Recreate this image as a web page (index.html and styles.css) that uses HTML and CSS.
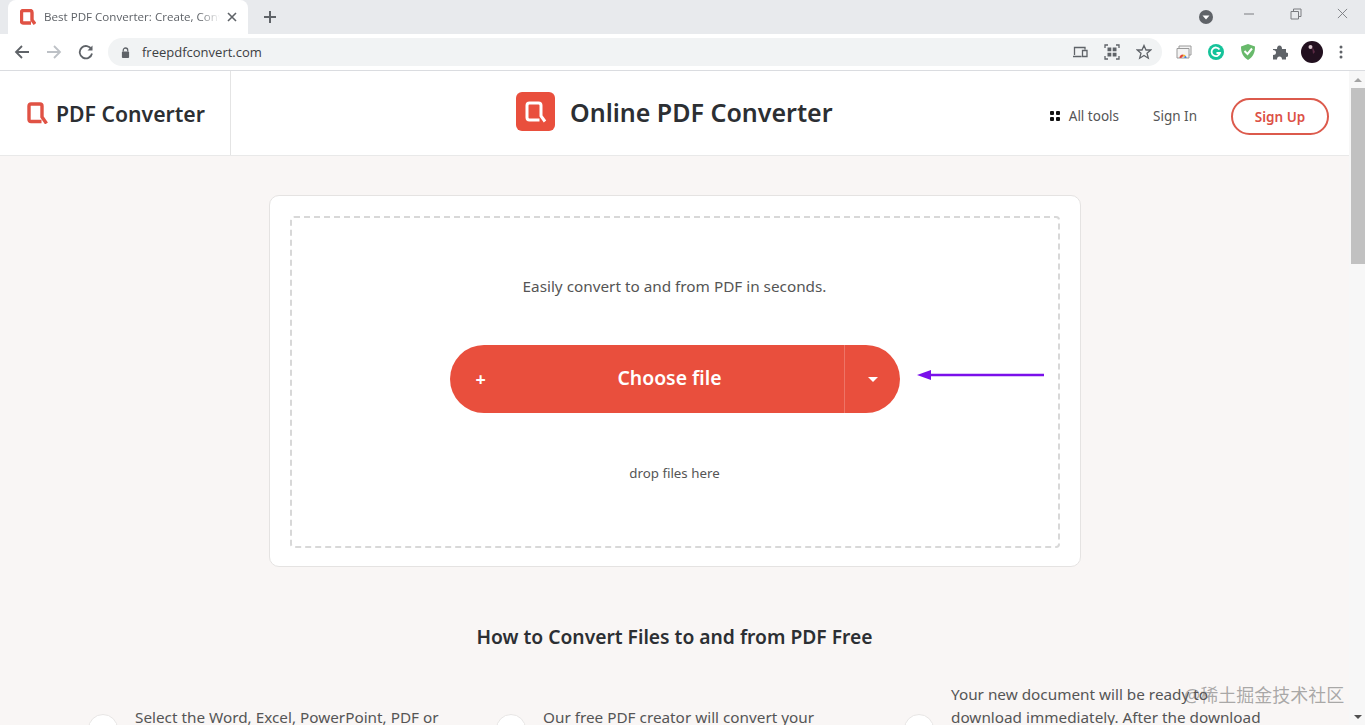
FILE: index.html
```html
<!DOCTYPE html>
<html lang="en">
<head>
<meta charset="utf-8">
<title>Best PDF Converter</title>
<link rel="stylesheet" href="styles.css">
</head>
<body>
<div class="app">
  <div class="tabstrip">
    <div class="tab">
      <svg class="tab-logo" viewBox="0 0 16 16"><path class="logo-stroke" d="M11 14H3.500Q1.500 14 1.500 12V3.500Q1.500 1.500 3.500 1.500H10Q12 1.500 12 3.500V11L15 15"/></svg>
      <span class="tab-title">Best PDF Converter: Create, Convert</span>
      <svg class="tab-close" viewBox="0 0 10 10"><path d="M1 1L9 9M9 1L1 9"/></svg>
    </div>
    <svg class="new-tab" viewBox="0 0 12 12"><path d="M6 0V12M0 6H12"/></svg>
    <div class="strip-right">
      <svg class="media" viewBox="0 0 14 14"><circle cx="7" cy="7" r="7"/><path d="M3.500 5.500H10.500L7 9.500Z"/></svg>
      <div class="winctl">
        <svg viewBox="0 0 12 12"><path d="M1 6H11"/></svg>
        <svg viewBox="0 0 12 12"><path d="M1 3.500H8.500V11H1ZM3.500 3.500V1H11V8.500H8.500"/></svg>
        <svg viewBox="0 0 12 12"><path d="M1 1L11 11M11 1L1 11"/></svg>
      </div>
    </div>
  </div>
  <div class="toolbar">
    <svg class="nav" viewBox="0 0 16 16"><path d="M15 8H2M8 2L2 8L8 14"/></svg>
    <svg class="nav nav-off" viewBox="0 0 16 16"><path d="M1 8H14M8 2L14 8L8 14"/></svg>
    <svg class="nav" viewBox="0 0 16 16"><path d="M13.500 5.500A6.200 6.200 0 1 0 14 9.500"/><path class="fill-icon" d="M14.500 1.500V6.500H9.500Z"/></svg>
    <div class="omnibox">
      <svg class="lock" viewBox="0 0 10 12"><path d="M2.500 5V3.500A2.500 2.500 0 0 1 7.500 3.500V5" class="lock-ring"/><rect x="1" y="5" width="8" height="7" rx="1"/></svg>
      <span class="url">freepdfconvert.com</span>
      <div class="omni-icons">
        <svg viewBox="0 0 16 16"><path d="M2.500 11V3.500H13V5.500M1 12.500H9.500M10.500 6.500H15V12.500H10.500Z"/></svg>
        <svg viewBox="0 0 16 16"><path d="M1 4V1H4M12 1H15V4M15 12V15H12M4 15H1V12"/><path class="fill-icon" d="M3.500 3.500H7.300V7.300H3.500ZM8.700 3.500H12.500V7.300H8.700ZM3.500 8.700H7.300V12.500H3.500ZM8.700 8.700H12.500V12.500H8.700Z"/></svg>
        <svg viewBox="0 0 16 16"><path d="M8 1.500L10 6H14.800L11 9.200L12.300 14.200L8 11.500L3.700 14.200L5 9.200L1.200 6H6Z"/></svg>
      </div>
    </div>
    <div class="ext-icons">
      <svg viewBox="0 0 16 16"><path class="ext-frame" d="M3 4V2H15V11H13M1 4.500H13V14H1Z"/><path class="ext-r" d="M3.500 14A3.500 3.500 0 0 1 7 10.500V12.500A1.500 1.500 0 0 0 5.500 14Z"/><path class="ext-y" d="M7 10.500A3.500 3.500 0 0 1 9.700 11.800L8.200 13A1.500 1.500 0 0 0 7 12.500Z"/><path class="ext-b" d="M9.700 11.800A3.500 3.500 0 0 1 10.500 14H8.500A1.500 1.500 0 0 0 8.200 13Z"/></svg>
      <svg viewBox="0 0 16 16"><circle class="ext-g" cx="8" cy="8" r="8"/><path class="ext-gl" d="M11.500 5.500A4.300 4.300 0 1 0 12 9H8.500"/></svg>
      <svg viewBox="0 0 16 16"><path class="ext-s" d="M8 0L15 2.500C15 9 13 13 8 16C3 13 1 9 1 2.500Z"/><path class="ext-c" d="M4.500 7L7.500 10L12 4.500"/></svg>
      <svg viewBox="0 0 16 16"><path class="fill-icon" d="M1 5H5Q5 1.500 7.500 1.500T10 5H14V8.500Q16.500 8.500 16.500 10.700T14 13V15.500H10Q10 12.500 7.500 12.500T5 15.500H1V11Q4 11 4 8.500T1 6Z"/></svg>
      <svg class="avatar" viewBox="0 0 22 22"><circle class="av-bg" cx="11" cy="11" r="11"/><circle class="av-dot" cx="9.500" cy="6" r="2"/><path class="av-m" d="M11 5L14 11L12 13Z"/></svg>
      <svg class="menu" viewBox="0 0 4 14"><circle cx="2" cy="2" r="1.500"/><circle cx="2" cy="7" r="1.500"/><circle cx="2" cy="12" r="1.500"/></svg>
    </div>
  </div>
  <div class="viewport">
    <div class="page">
      <header class="site-header">
        <div class="brand">
          <svg class="brand-logo" viewBox="0 0 21 22"><path class="logo-stroke" d="M14.500 19.500H4Q2 19.500 2 17.500V4Q2 2 4 2H13Q15 2 15 4V15L19.500 21.500"/></svg>
          <span class="brand-name">PDF Converter</span>
        </div>
        <div class="headline">
          <span class="headline-badge"><svg viewBox="0 0 26 26"><path class="badge-stroke" d="M16.500 21H6.500Q4 21 4 18.500V6.500Q4 4 6.500 4H15.500Q18 4 18 6.500V17L22 22.500"/></svg></span>
          <h1 class="headline-text">Online PDF Converter</h1>
        </div>
        <nav class="site-nav">
          <a class="nav-tools"><svg viewBox="0 0 10 10"><rect width="4" height="4" rx="1"/><rect x="6" width="4" height="4" rx="1"/><rect y="6" width="4" height="4" rx="1"/><rect x="6" y="6" width="4" height="4" rx="1"/></svg>All tools</a>
          <a class="nav-signin">Sign In</a>
          <a class="nav-signup">Sign Up</a>
        </nav>
      </header>
      <main class="content">
        <section class="card">
          <div class="dropzone">
            <p class="lead">Easily convert to and from PDF in seconds.</p>
            <div class="choose">
              <div class="choose-main">
                <span class="choose-plus">+</span>
                <span class="choose-label">Choose file</span>
              </div>
              <div class="choose-more"><span class="caret"></span></div>
              <svg class="arrow" viewBox="0 0 128 12"><path class="arrow-line" d="M12 6H127"/><path class="arrow-head" d="M0 6L14 1V11Z"/></svg>
            </div>
            <p class="drop">drop files here</p>
          </div>
        </section>
        <h2 class="howto">How to Convert Files to and from PDF Free</h2>
        <div class="steps">
          <div class="step"><span class="num">1</span><p>Select the Word, Excel, PowerPoint, PDF or other file you wish to convert.</p></div>
          <div class="step"><span class="num">2</span><p>Our free PDF creator will convert your document to PDF in seconds.</p></div>
          <div class="step"><span class="num">3</span><p>Your new document will be ready to download immediately. After the download is complete, your files are deleted from our servers.</p></div>
        </div>
      </main>
    </div>
    <div class="scrollbar">
      <span class="sb-up"></span>
      <span class="sb-thumb"></span>
      <span class="sb-space"></span>
      <span class="sb-down"></span>
    </div>
  </div>
  <div class="watermark">@稀土掘金技术社区</div>
</div>
</body>
</html>
```
FILE: styles.css
```css
* { box-sizing: border-box; }
html, body { margin: 0; height: 100%; overflow: hidden; }
body { font-family: "Noto Sans", "Open Sans", sans-serif; color: #333; }
p, h1, h2 { margin: 0; }
svg { display: block; flex: none; }

.app { position: relative; height: 100vh; display: flex; flex-direction: column; overflow: hidden; }

.tabstrip { height: 34px; flex: none; background: #e8eaed; display: flex; align-items: flex-end; padding-left: 8px; }
.tab { width: 240px; height: 34px; background: #fff; border-radius: 8px 8px 0 0; display: flex; align-items: center; padding: 0 11px 0 12px; }
.tab-logo { width: 16px; height: 16px; margin-right: 8px; }
.logo-stroke { fill: none; stroke: #e05244; stroke-width: 3.400; }
.tab-title { flex: 1; font: 11.600px/16px "Open Sans", sans-serif; color: #5f6368; white-space: nowrap; overflow: hidden; -webkit-mask-image: linear-gradient(to right, #000 88%, transparent); mask-image: linear-gradient(to right, #000 88%, transparent); }
.tab-close { width: 10px; height: 10px; margin-left: 7px; }
.tab-close path { stroke: #5f6368; stroke-width: 1.600; fill: none; }
.new-tab { width: 12px; height: 12px; margin: 0 0 11px 16px; }
.new-tab path { stroke: #5f6368; stroke-width: 2; fill: none; }
.strip-right { margin-left: auto; display: flex; align-items: flex-start; align-self: stretch; }
.media { width: 14px; height: 14px; margin: 10px 30px 0 0; }
.media circle { fill: #5f6368; }
.media path { fill: #fff; }
.winctl { display: flex; gap: 35px; padding: 8px 17px 0 0; }
.winctl svg { width: 12px; height: 12px; }
.winctl svg:last-child { width: 11px; height: 11px; }
.winctl path { fill: none; stroke: #7a7c80; stroke-width: 1; }

.toolbar { height: 37px; flex: none; background: #fff; border-bottom: 1px solid #dadce0; display: flex; align-items: center; padding: 0 0 0 14px; }
.nav { width: 16px; height: 16px; margin-right: 16px; }
.nav path { fill: none; stroke: #5f6368; stroke-width: 1.800; }
.nav path.fill-icon { fill: #5f6368; stroke: none; }
.nav-off path { stroke: #bdc1c6; }
.omnibox { width: 1054px; height: 28px; margin-left: -2px; background: #f1f3f4; border-radius: 14px; display: flex; align-items: center; padding: 0 10px 0 13px; }
.lock { width: 9px; height: 11px; margin-right: 12px; }
.lock rect { fill: #5f6368; }
.lock-ring { fill: none; stroke: #5f6368; stroke-width: 1.400; }
.url { font: 13px/18px "Open Sans", sans-serif; color: #3c4043; }
.omni-icons { margin-left: auto; display: flex; gap: 16px; }
.omni-icons svg { width: 16px; height: 16px; }
.omni-icons path { fill: none; stroke: #5f6368; stroke-width: 1.300; }
.omni-icons path.fill-icon { fill: #5f6368; stroke: none; }
.ext-icons { display: flex; align-items: center; gap: 16px; margin-left: 14px; }
.ext-icons svg { width: 16px; height: 16px; }
.ext-icons .fill-icon { fill: #5f6368; }
.ext-frame { fill: #f4f4f4; stroke: #9a9a9a; stroke-width: 1; }
.ext-r { fill: #e0483b; }
.ext-y { fill: #f2b632; }
.ext-b { fill: #3e7fe0; }
.ext-g { fill: #15c39a; }
.ext-gl { fill: none; stroke: #fff; stroke-width: 1.800; }
.ext-s { fill: #68b96b; }
.ext-c { fill: none; stroke: #fff; stroke-width: 2; }
.ext-icons .avatar { width: 22px; height: 22px; margin: 0 -3px 0 -3px; }
.av-bg { fill: #22101f; }
.av-dot { fill: #d8c4cc; }
.av-m { fill: #5a2a44; }
.ext-icons .menu { width: 4px; height: 14px; margin-left: 3px; }
.menu circle { fill: #5f6368; }

.viewport { flex: 1; min-height: 0; display: flex; }
.page { flex: 1; min-width: 0; background: #f9f6f5; }

.site-header { height: 85px; background: #fff; border-bottom: 1px solid #e9e9e9; display: flex; align-items: center; position: relative; }
.brand { width: 231px; align-self: stretch; border-right: 1px solid #e4e4e4; display: flex; align-items: center; padding: 0 0 0 27px; }
.brand-logo { width: 21px; height: 22px; margin-right: 8px; }
.brand-name { font-size: 21.200px; font-weight: 600; color: #2c2f33; white-space: nowrap; }
.headline { position: absolute; left: 516px; top: 21px; display: flex; align-items: center; }
.headline-badge { width: 39px; height: 39px; border-radius: 6px; background: #e94f3d; display: flex; align-items: center; justify-content: center; margin-right: 15px; }
.headline-badge svg { width: 26px; height: 26px; }
.badge-stroke { fill: none; stroke: #fff; stroke-width: 3; }
.headline-text { font-size: 25px; font-weight: 600; color: #2c2f33; white-space: nowrap; }
.site-nav { margin-left: auto; display: flex; align-items: center; padding: 5px 20px 0 0; font-size: 13.500px; color: #555; }
.nav-tools { display: flex; align-items: center; margin-right: 34px; }
.nav-tools svg { width: 10px; height: 10px; margin-right: 9px; }
.nav-tools rect { fill: #111; }
.nav-signin { margin-right: 34px; }
.nav-signup { width: 98px; height: 37px; margin: 1px 0 -1px; border: 2px solid #dc5a4c; border-radius: 19px; display: flex; align-items: center; justify-content: center; color: #dc5045; font-weight: 600; }

.content { display: flex; flex-direction: column; align-items: center; padding-top: 39px; }
.card { width: 812px; height: 372px; background: #fff; border: 1px solid #e5e3e2; border-radius: 10px; padding: 20px 20px 18px; }
.dropzone { height: 100%; border: 2px dashed #d8d8d8; border-radius: 4px; display: flex; flex-direction: column; align-items: center; padding-top: 58px; }
.lead { font-size: 15.300px; line-height: 20px; color: #555; }
.choose { position: relative; width: 450px; height: 68px; margin-top: 49px; background: #e94f3d; border-radius: 34px; display: flex; color: #fff; }
.choose-main { flex: 1; display: flex; align-items: center; position: relative; justify-content: center; border-right: 1px solid #ee7466; padding-left: 46px; }
.choose-plus { position: absolute; left: 26px; font-size: 18px; font-weight: 700; }
.choose-label { font-size: 19.400px; font-weight: 600; line-height: 26px; margin-top: -3px; }
.choose-more { width: 55px; display: flex; align-items: center; justify-content: center; padding-left: 2px; }
.caret { width: 0; height: 0; border: 5px solid transparent; border-top: 5px solid #fff; border-bottom: 0; }
.arrow { position: absolute; left: 467px; top: 24px; width: 128px; height: 12px; }
.arrow-line { stroke: #7a10ea; stroke-width: 2.400; fill: none; }
.arrow-head { fill: #7a10ea; }
.drop { margin-top: 50px; font-size: 13.300px; line-height: 20px; color: #555; }
.howto { margin-top: 57px; font-size: 19.250px; line-height: 26px; font-weight: 600; color: #2c2f33; }
.steps { width: 1173px; display: grid; grid-template-columns: repeat(3, 408px); margin-top: 33px; }
.step { display: flex; align-items: center; gap: 17px; }
.num { width: 30px; height: 30px; flex: none; background: #fff; border: 1px solid #e8e6e5; border-radius: 50%; display: flex; align-items: center; justify-content: center; color: #e94f3d; font-weight: 700; font-size: 15px; }
.step p { width: 322px; flex: none; font-size: 15.300px; line-height: 23px; color: #555; }

.scrollbar { width: 16px; flex: none; background: #f7f7f7; display: flex; flex-direction: column; align-items: center; }
.sb-up { width: 0; height: 0; flex: none; margin: 7px 0 6px 2px; border: 4px solid transparent; border-bottom: 4px solid #a3a3a3; border-top: 0; }
.sb-thumb { width: 14px; height: 176px; flex: none; margin-left: 2px; background: #c1c1c1; }
.sb-space { flex: 1; }
.sb-down { width: 0; height: 0; flex: none; margin: 0 0 6px 2px; border: 4px solid transparent; border-top: 4px solid #505050; border-bottom: 0; }

.watermark { position: absolute; left: 1184px; top: 683px; font: 18px/24px "Noto Sans", "Noto Sans CJK SC", sans-serif; color: rgba(90, 90, 90, 0.5); white-space: nowrap; }
```
